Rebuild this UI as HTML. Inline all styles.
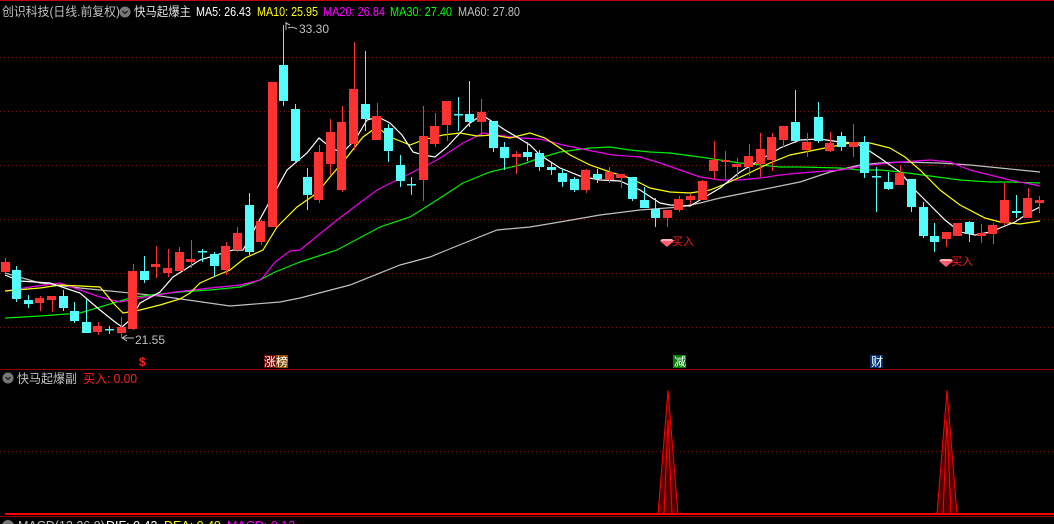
<!DOCTYPE html>
<html><head><meta charset="utf-8"><style>
html,body{margin:0;padding:0;background:#000;}
svg{display:block;font-family:"Liberation Sans","Noto Sans CJK SC",sans-serif;}
</style></head><body>
<svg width="1054" height="524" viewBox="0 0 1054 524" xmlns="http://www.w3.org/2000/svg">
<rect width="1054" height="524" fill="#000"/>
<line x1="0" y1="0.5" x2="1054" y2="0.5" stroke="#c00000"/>
<g stroke="#8a1010" stroke-dasharray="1,3">
<line x1="0" y1="57.5" x2="1054" y2="57.5"/><line x1="0" y1="111.5" x2="1054" y2="111.5"/>
<line x1="0" y1="165.5" x2="1054" y2="165.5"/><line x1="0" y1="219.5" x2="1054" y2="219.5"/>
<line x1="0" y1="273.5" x2="1054" y2="273.5"/><line x1="0" y1="327.5" x2="1054" y2="327.5"/>
<line x1="0" y1="451.5" x2="1054" y2="451.5"/>
</g>
<g fill="none" stroke-width="1.2">
<polyline stroke="#c0c0c0" points="5,273 40,283 80,288 120,292 160,296 230,306 280,302 300,298 350,285 400,265 430,257 447,250 497,230 530,227 560,222 600,215 640,210 680,207 700,203 720,198 760,190 800,182 830,172 860,165 880,163 900,162 940,163 970,165 1000,168 1040,172"/>
<polyline stroke="#00ee00" points="5,318 40,316 80,313 130,298 150,295 180,292 210,290 240,287 260,280 275,272 290,266 300,262 337,250 380,227 410,217 437,200 463,183 490,172 520,165 540,158 560,152 590,148 610,147 630,150 650,152 670,153 700,157 720,160 740,163 760,165 780,167 800,167 840,168 860,170 880,170 900,172 930,176 960,180 990,182 1010,182 1040,183"/>
<polyline stroke="#ee00ee" points="5,291 30,287 60,283 100,297 120,302 140,298 175,292 210,288 240,285 260,280 265,275 275,262 290,251 300,250 337,220 377,190 417,170 437,160 463,143 483,133 497,135 520,138 540,139 563,145 587,150 613,155 640,157 660,163 680,170 700,177 720,180 740,180 760,178 780,175 800,173 840,170 870,165 900,162 930,160 950,162 970,170 990,175 1010,180 1030,184 1040,186"/>
<polyline stroke="#ffff00" points="5,291 40,288 60,285 100,287 115,305 123,313 140,310 160,305 180,299 190,293 200,283 218,275 230,270 245,258 263,250 277,227 297,207 317,193 330,177 347,157 363,137 377,127 390,137 410,145 423,140 443,135 460,133 477,136 493,135 510,138 530,133 545,138 560,148 570,155 590,165 610,172 630,178 650,188 670,192 690,193 710,190 725,184 745,175 770,163 790,155 825,148 850,143 870,143 890,148 905,157 920,170 940,190 960,205 985,218 1000,222 1020,224 1040,221"/>
<polyline stroke="#ffffff" points="5,275 20,281 50,283 80,293 100,310 115,322 122,327 130,320 140,303 160,292 173,277 200,260 233,250 243,250 287,170 307,153 319,138 330,147 342,153 355,140 367,120 378,117 390,123 402,135 413,152 423,155 435,157 447,147 460,133 470,123 482,115 493,122 505,130 517,137 530,145 540,155 560,168 580,176 600,180 620,181 640,190 660,203 670,205 690,206 700,200 720,188 740,172 760,160 780,148 800,140 820,139 840,142 855,143 865,148 880,158 900,172 915,190 930,205 945,220 960,232 975,235 990,232 1000,228 1015,222 1030,212 1040,207"/>
</g>
<g fill="#ff3232" stroke="#ff3232">
<path fill="none" d="M5.5 258V275M40.5 296V311M52.5 296V312M98.5 322V335M121.5 317V338M133.5 264V330M156.5 246V278M168.5 249V277M179.5 247V271M191.5 240V268M226.5 242V275M237.5 227V252M261.5 220V245M272.5 82V227M319.5 145V203M330.5 119V175M342.5 106V192M354.5 42V150M377.5 103V140M423.5 106V201M435.5 113V147M447.5 101V141M481.5 99V135M516.5 151V174M586.5 169V193M609.5 167V183M621.5 174V188M667.5 210V227M679.5 196V212M690.5 194V205M702.5 180V200M714.5 141V179M725.5 151V179M737.5 158V177M749.5 144V176M760.5 133V177M772.5 133V171M783.5 126V147M807.5 133V157M830.5 132V152M853.5 124V157M900.5 165V185M946.5 232V247M958.5 223V236M981.5 224V243M993.5 223V244M1004.5 183V225M1028.5 188V218M1039.5 196V213"/>
<g stroke="none">
<rect x="1" y="262" width="9" height="10"/><rect x="35" y="298" width="9" height="5"/><rect x="47" y="296" width="9" height="4"/>
<rect x="93" y="326" width="9" height="6"/><rect x="117" y="327" width="9" height="6"/><rect x="128" y="271" width="9" height="58"/>
<rect x="151" y="264" width="9" height="3"/><rect x="163" y="268" width="9" height="5"/><rect x="175" y="252" width="9" height="19"/>
<rect x="186" y="259" width="9" height="3"/><rect x="221" y="246" width="9" height="24"/><rect x="233" y="233" width="9" height="17"/>
<rect x="256" y="221" width="9" height="21"/><rect x="268" y="82" width="9" height="145"/><rect x="314" y="152" width="9" height="48"/>
<rect x="326" y="132" width="9" height="32"/><rect x="337" y="122" width="9" height="68"/><rect x="349" y="89" width="9" height="55"/>
<rect x="372" y="116" width="9" height="24"/><rect x="419" y="136" width="9" height="44"/><rect x="430" y="126" width="9" height="18"/>
<rect x="442" y="101" width="9" height="24"/><rect x="477" y="112" width="9" height="10"/><rect x="512" y="154" width="9" height="3"/>
<rect x="581" y="170" width="9" height="20"/><rect x="605" y="172" width="9" height="8"/><rect x="616" y="174" width="9" height="4"/>
<rect x="663" y="210" width="9" height="8"/><rect x="674" y="199" width="9" height="11"/><rect x="686" y="196" width="9" height="4"/>
<rect x="698" y="181" width="9" height="19"/><rect x="709" y="160" width="9" height="11"/><rect x="721" y="160" width="9" height="2"/>
<rect x="732" y="164" width="9" height="3"/><rect x="744" y="156" width="9" height="11"/><rect x="756" y="149" width="9" height="15"/>
<rect x="767" y="137" width="9" height="23"/><rect x="779" y="126" width="9" height="14"/><rect x="802" y="142" width="9" height="8"/>
<rect x="825" y="143" width="9" height="8"/><rect x="849" y="142" width="9" height="5"/><rect x="895" y="173" width="9" height="12"/>
<rect x="942" y="232" width="9" height="7"/><rect x="953" y="223" width="9" height="13"/><rect x="977" y="233" width="9" height="3"/>
<rect x="988" y="225" width="9" height="9"/><rect x="1000" y="200" width="9" height="23"/><rect x="1023" y="198" width="9" height="20"/>
<rect x="1035" y="200" width="9" height="3"/>
</g></g>
<g fill="#54fcfc" stroke="#54fcfc">
<path fill="none" d="M16.5 266V302M28.5 295V308M63.5 290V311M74.5 302V323M86.5 299V333M109.5 326V334M144.5 256V283M202.5 249V262M214.5 252V277M249.5 193V255M283.5 25V106M295.5 104V163M307.5 168V210M365.5 51V131M388.5 124V162M400.5 155V187M411.5 177V195M458.5 97V131M469.5 81V127M493.5 121V152M504.5 142V170M527.5 142V161M539.5 150V171M551.5 163V175M562.5 169V187M574.5 177V192M597.5 169V183M632.5 177V201M644.5 187V208M655.5 198V227M795.5 90V143M818.5 102V143M841.5 132V151M864.5 136V178M876.5 167V212M888.5 172V190M911.5 179V212M923.5 202V238M934.5 223V252M969.5 221V242M1016.5 195V218"/>
<g stroke="none">
<rect x="12" y="270" width="9" height="29"/><rect x="24" y="300" width="9" height="4"/><rect x="59" y="296" width="9" height="12"/>
<rect x="70" y="311" width="9" height="10"/><rect x="82" y="322" width="9" height="11"/><rect x="105" y="329" width="9" height="1.5"/>
<rect x="140" y="271" width="9" height="9"/><rect x="198" y="251" width="9" height="1.5"/><rect x="210" y="254" width="9" height="12"/>
<rect x="245" y="205" width="9" height="47"/><rect x="279" y="65" width="9" height="36"/><rect x="291" y="109" width="9" height="52"/>
<rect x="303" y="177" width="9" height="18"/><rect x="361" y="104" width="9" height="15"/><rect x="384" y="128" width="9" height="23"/>
<rect x="396" y="165" width="9" height="16"/><rect x="407" y="184" width="9" height="1.5"/><rect x="454" y="114" width="9" height="1.5"/>
<rect x="465" y="114" width="9" height="8"/><rect x="489" y="121" width="9" height="27"/><rect x="500" y="147" width="9" height="11"/>
<rect x="523" y="152" width="9" height="5"/><rect x="535" y="153" width="9" height="14"/><rect x="547" y="167" width="9" height="3"/>
<rect x="558" y="173" width="9" height="9"/><rect x="570" y="179" width="9" height="11"/><rect x="593" y="174" width="9" height="5"/>
<rect x="628" y="177" width="9" height="22"/><rect x="640" y="200" width="9" height="8"/><rect x="651" y="209" width="9" height="9"/>
<rect x="791" y="122" width="9" height="19"/><rect x="814" y="117" width="9" height="24"/><rect x="837" y="136" width="9" height="11"/>
<rect x="860" y="142" width="9" height="31"/><rect x="872" y="176" width="9" height="1.5"/><rect x="884" y="182" width="9" height="7"/>
<rect x="907" y="179" width="9" height="28"/><rect x="919" y="207" width="9" height="29"/><rect x="930" y="236" width="9" height="6"/>
<rect x="965" y="222" width="9" height="12"/><rect x="1012" y="211" width="9" height="2"/>
</g></g>
<g font-size="12" fill="#c0c0c0">
<path d="M286 22V30M286 23L290 25" stroke="#c0c0c0" fill="none"/>
<path d="M288 28Q292 26 297 29" stroke="#c0c0c0" fill="none"/>
<text x="299" y="33">33.30</text>
<path d="M122 338L127 335M122 338L127 341M122 338H134" stroke="#c0c0c0" fill="none"/>
<text x="135" y="344">21.55</text>
</g>
<g font-size="11" fill="#ff2020">
<path d="M660 241h14l-7 6z" fill="#ff6070"/><path d="M662 239h10l2 2h-14z" fill="#ffb0b8"/>
<text x="672" y="245">买入</text>
<path d="M939 261h14l-7 6z" fill="#ff6070"/><path d="M941 259h10l2 2h-14z" fill="#ffb0b8"/>
<text x="951" y="265">买入</text>
</g>
<g font-size="12.5" lengthAdjust="spacingAndGlyphs">
<text x="2" y="16" fill="#c0c0c0" textLength="118" lengthAdjust="spacingAndGlyphs">创识科技(日线.前复权)</text>
<circle cx="125" cy="12" r="5.5" fill="#777"/><path d="M122.5 11l2.5 2.5 2.5-2.5" stroke="#222" stroke-width="1.5" fill="none"/>
<text x="134" y="16" fill="#e0e0e0" textLength="57" lengthAdjust="spacingAndGlyphs">快马起爆主</text>
<text x="196" y="16" fill="#fff" textLength="55" lengthAdjust="spacingAndGlyphs">MA5: 26.43</text>
<text x="257" y="16" fill="#ffff00" textLength="61" lengthAdjust="spacingAndGlyphs">MA10: 25.95</text>
<text x="323" y="16" fill="#ff00ff" textLength="62" lengthAdjust="spacingAndGlyphs">MA20: 26.84</text>
<text x="390" y="16" fill="#00ff00" textLength="62" lengthAdjust="spacingAndGlyphs">MA30: 27.40</text>
<text x="458" y="16" fill="#c0c0c0" textLength="62" lengthAdjust="spacingAndGlyphs">MA60: 27.80</text>
</g>
<text x="139" y="366" font-size="12" font-weight="bold" fill="#ff2020">$</text>
<rect x="264" y="355" width="12" height="13" fill="#700000"/><rect x="276" y="355" width="12" height="13" fill="#8a4a00"/>
<text x="264" y="366" font-size="12" fill="#fff">涨榜</text>
<rect x="673" y="355" width="13" height="13" fill="#008000"/><text x="674" y="366" font-size="12" fill="#fff">减</text>
<rect x="870" y="355" width="13" height="13" fill="#003070"/><text x="871" y="366" font-size="12" fill="#fff">财</text>
<line x1="0" y1="369.5" x2="1054" y2="369.5" stroke="#a00000"/>
<circle cx="8" cy="378" r="5.5" fill="#777"/><path d="M5.5 377l2.5 2.5 2.5-2.5" stroke="#222" stroke-width="1.5" fill="none"/>
<text x="17" y="383" font-size="12.5" fill="#c0c0c0" textLength="60" lengthAdjust="spacingAndGlyphs">快马起爆副</text>
<text x="83" y="383" font-size="12.5" fill="#ff2020" textLength="54" lengthAdjust="spacingAndGlyphs">买入: 0.00</text>
<path d="M658 514L668 390L678 514M664 514L668 420L672 514" stroke="#ff0000" fill="#500" stroke-width="1"/>
<path d="M937 514L947 390L957 514M943 514L947 420L951 514" stroke="#ff0000" fill="#500" stroke-width="1"/>
<line x1="5" y1="514" x2="1054" y2="514" stroke="#ff0000" stroke-width="2"/>
<line x1="0" y1="516.5" x2="1054" y2="516.5" stroke="#900"/>
<circle cx="8" cy="526" r="6" fill="#777"/>
<g font-size="12.5"><text x="18" y="530" fill="#c0c0c0">MACD(12,26,9)</text>
<text x="106" y="530" fill="#fff">DIF: 0.42</text><text x="164" y="530" fill="#ffff00">DEA: 0.49</text><text x="227" y="530" fill="#ff00ff">MACD: 0.13</text></g>
</svg>
</body></html>
